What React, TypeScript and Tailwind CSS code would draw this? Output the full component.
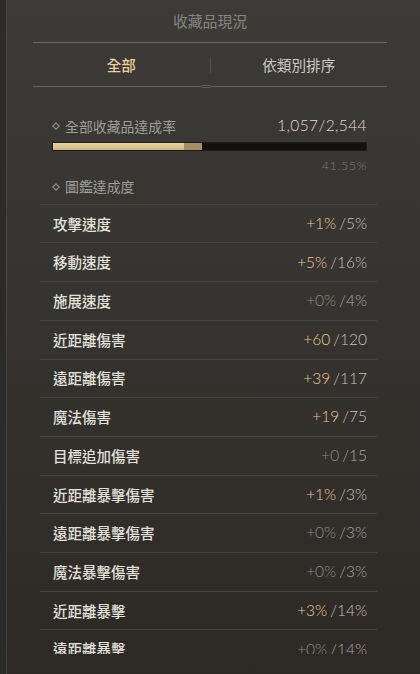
import React from 'react';

type Stat = { label: string; cur: string; max: string; active: boolean };

const stats: Stat[] = [
  { label: '攻擊速度', cur: '+1%', max: '/5%', active: true },
  { label: '移動速度', cur: '+5%', max: '/16%', active: true },
  { label: '施展速度', cur: '+0%', max: '/4%', active: false },
  { label: '近距離傷害', cur: '+60', max: '/120', active: true },
  { label: '遠距離傷害', cur: '+39', max: '/117', active: true },
  { label: '魔法傷害', cur: '+19', max: '/75', active: true },
  { label: '目標追加傷害', cur: '+0', max: '/15', active: false },
  { label: '近距離暴擊傷害', cur: '+1%', max: '/3%', active: true },
  { label: '遠距離暴擊傷害', cur: '+0%', max: '/3%', active: false },
  { label: '魔法暴擊傷害', cur: '+0%', max: '/3%', active: false },
  { label: '近距離暴擊', cur: '+3%', max: '/14%', active: true },
  { label: '遠距離暴擊', cur: '+0%', max: '/14%', active: false },
];

const cjk = "font-['Noto_Sans_CJK_TC','Noto_Sans',sans-serif]";
const num = "font-['Lato','Noto_Sans',sans-serif]";

const Diamond = () => (
  <svg width="8" height="8" viewBox="0 0 8 8" className="mr-[5px] shrink-0">
    <path d="M4 0.8 L7.2 4 L4 7.2 L0.8 4 Z" fill="none" stroke="#8f8e88" strokeWidth="1.1" />
  </svg>
);

const App: React.FC = () => {
  return (
    <div className="w-[420px] h-[674px] overflow-hidden flex bg-gradient-to-b from-[#3c3b37] via-[#35332f] to-[#2d2a26]">
      {/* left frame strip */}
      <div className="w-[7px] h-full bg-[#2b2b29] border-r border-[#46453f]" />

      <div className="flex-1 flex flex-col">
        {/* title */}
        <div className={`${cjk} h-[42px] flex items-center justify-center text-[14.8px] text-[#86857f] -ml-[7px]`}>
          收藏品現況
        </div>

        {/* tabs */}
        <div className="ml-[26px] mr-[33px] h-[45px] border-t border-b border-[#69665d] flex items-center relative">
          <div className={`${cjk} flex-1 text-center text-[14.6px] font-medium text-[#ead09a]`}>全部</div>
          <div className="w-px h-[16px] bg-[#4f4d47]" />
          <div className={`${cjk} flex-1 text-center text-[14.6px] text-[#cbcac3]`}>依類別排序</div>
          <div className="absolute left-1/2 -bottom-[2px] -translate-x-[10px] w-[12px] h-[3px] border border-[#5f5d55] rounded-full bg-[#38372f]" />
        </div>

        {/* overall completion */}
        <div className="ml-[45px] mr-[53px] mt-[28px]">
          <div className="flex items-center justify-between h-[22px]">
            <div className={`${cjk} flex items-center text-[13.9px] text-[#9f9e98]`}>
              <Diamond />
              全部收藏品達成率
            </div>
            <div className={`${num} font-light text-[15.5px] text-[#e2dccd] tracking-[0.4px]`}>1,057/2,544</div>
          </div>
          <div className="mt-[5px] h-[9px] bg-[#121110] border border-[#1c1b19] flex">
            <div className="w-[131px] h-full bg-gradient-to-b from-[#ead7a6] to-[#cfb57c]" />
            <div className="w-[18px] h-full bg-[#a68e64]" />
          </div>
          <div className={`${num} font-light mt-[6px] text-right text-[12.5px] text-[#7b7a74] tracking-[0.6px]`}>41.55%</div>
          <div className={`${cjk} mt-[1px] flex items-center text-[13.9px] text-[#9f9e98] h-[20px]`}>
            <Diamond />
            圖鑑達成度
          </div>
        </div>

        {/* stat list */}
        <div className="mt-[7px] ml-[33px] mr-[43px] h-[450px] overflow-hidden border-t border-[#48463f]">
          {stats.map((s) => (
            <div key={s.label} className="h-[38.7px] border-b border-[#46443e] flex items-center justify-between pl-[13px] pr-[10px]">
              <span className={`${cjk} font-medium text-[14.5px] text-[#e2e1db]`}>{s.label}</span>
              <span className={`${num} font-light text-[15.5px]`}>
                <span className={s.active ? 'text-[#e8cb90]' : 'text-[#8c8b85]'}>{s.cur}</span>
                <span className={s.active ? 'text-[#c4c3bc] ml-[3px]' : 'text-[#a7a6a0] ml-[3px]'}>{s.max}</span>
              </span>
            </div>
          ))}
        </div>
      </div>
    </div>
  );
};

export default App;
